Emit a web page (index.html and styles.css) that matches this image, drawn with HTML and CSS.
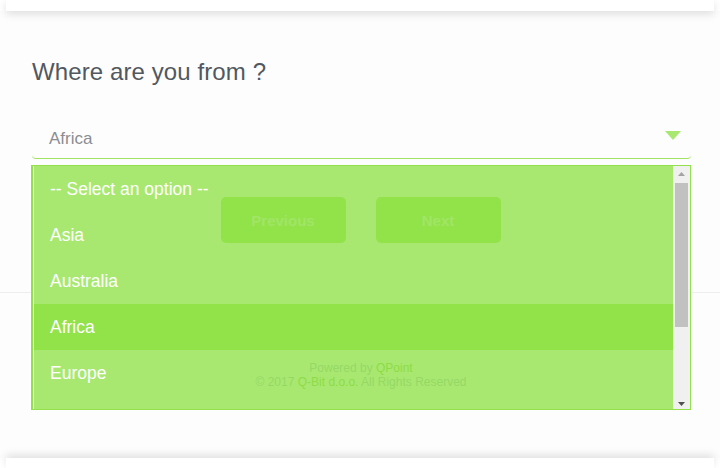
FILE: index.html
```html
<!DOCTYPE html>
<html>
<head>
    <meta charset='utf-8'>
    <title>Where are you from</title>
    <meta name='viewport' content='width=device-width, initial-scale=1'>
    <link rel="stylesheet" href="styles.css">
</head>
<body>
    <div class="top-bar"></div>

    <div class="card">
        <div class="question">
            <h2>Where are you from ?</h2>

            <div class="select-wrap">
                <div class="select">
                    <span>Africa</span>
                    <svg class="caret" width="16" height="9" viewBox="0 0 16 9"><path d="M0 0 L16 0 L8 9 Z" fill="#a8e870"/></svg>
                </div>

                <!-- open dropdown list -->
                <div class="options">
                    <ul>
                        <li>-- Select an option --</li>
                        <li>Asia</li>
                        <li>Australia</li>
                        <li class="selected">Africa</li>
                        <li>Europe</li>
                    </ul>
                    <div class="scrollbar">
                        <svg class="sb-arrow" width="7" height="4" viewBox="0 0 7 4"><path d="M0 4 L7 4 L3.5 0 Z" fill="#a3a3a3"/></svg>
                        <div class="thumb"></div>
                        <svg class="sb-arrow down" width="7" height="4" viewBox="0 0 7 4"><path d="M0 0 L7 0 L3.5 4 Z" fill="#505050"/></svg>
                    </div>
                </div>
            </div>

            <div class="buttons">
                <button class="btn">Previous</button>
                <button class="btn">Next</button>
            </div>
        </div>

        <div class="footer">
            <p>Powered by <a href="#">QPoint</a></p>
            <p>&copy; 2017 <a href="#">Q-Bit d.o.o.</a> All Rights Reserved</p>
        </div>
    </div>

    <div class="bottom-bar"></div>
</body>
</html>
```

FILE: styles.css
```css
* {
    margin: 0;
    padding: 0;
    box-sizing: border-box;
}
body {
    font-family: "Liberation Sans", Arial, sans-serif;
    background: #fff;
    width: 720px;
    height: 468px;
    overflow: hidden;
}

.top-bar {
    height: 11px;
    margin: 0 6px;
    background: #fff;
    box-shadow: 0 3px 9px rgba(0, 0, 0, 0.13);
    position: relative;
    z-index: 3;
}

.card {
    background: #fdfdfd;
    height: 447px;
}

.question {
    padding: 47px 29px 0 32px;
    height: 282px;
    border-bottom: 1px solid #eeeeee;
}

h2 {
    font-size: 24px;
    font-weight: normal;
    color: #515860;
    letter-spacing: 0.1px;
}

.select-wrap {
    position: relative;
    margin-top: 38px;
}

.select {
    display: flex;
    align-items: center;
    justify-content: space-between;
    height: 35px;
    padding: 0 10px 4px 17px;
    border-bottom: 1px solid #9fe462;
    border-radius: 0 0 4px 4px;
    font-size: 17px;
    color: #8a8d92;
}

.caret {
    margin-top: -7px;
}

.options {
    position: absolute;
    top: 41px;
    left: -1px;
    width: 660px;
    height: 245px;
    display: flex;
    background: #a8e870;
    border: 1px solid #92e04a;
    border-left: 2px solid #92e04a;
    box-shadow: inset 1px 0 0 #ffffff;
    z-index: 1;
    overflow: hidden;
}

.options ul {
    list-style: none;
    flex: 1;
    padding-left: 1px;
}

.options li {
    height: 46px;
    line-height: 46px;
    padding-left: 16px;
    font-size: 17.5px;
    color: #fff;
}

.options li.selected {
    background: #92e24a;
}

.scrollbar {
    width: 17px;
    background: #f0f0f0;
    display: flex;
    flex-direction: column;
    align-items: center;
    padding: 6px 0 3px;
}

.sb-arrow {
    flex-shrink: 0;
}

.thumb {
    width: 13px;
    height: 144px;
    margin-top: 7px;
    background: #c1c1c1;
}

.sb-arrow.down {
    margin-top: auto;
}

.buttons {
    position: relative;
    z-index: 2;
    display: flex;
    justify-content: center;
    gap: 30px;
    margin-top: 38px;
    padding-right: 2px;
}

.btn {
    width: 125px;
    height: 46px;
    border: none;
    border-radius: 5px;
    background: #92e24a;
    color: #a0e566;
    font-family: "Liberation Sans", Arial, sans-serif;
    font-size: 15px;
    font-weight: bold;
}

.footer {
    position: relative;
    z-index: 2;
    text-align: center;
    padding-top: 68px;
    padding-left: 2px;
    font-size: 12px;
    line-height: 14px;
    color: #96d866;
}

.footer a {
    color: #8edc45;
    text-decoration: none;
}

.bottom-bar {
    height: 10px;
    margin: 0 6px;
    background: #fff;
    box-shadow: 0 -3px 9px rgba(0, 0, 0, 0.12);
}
```
